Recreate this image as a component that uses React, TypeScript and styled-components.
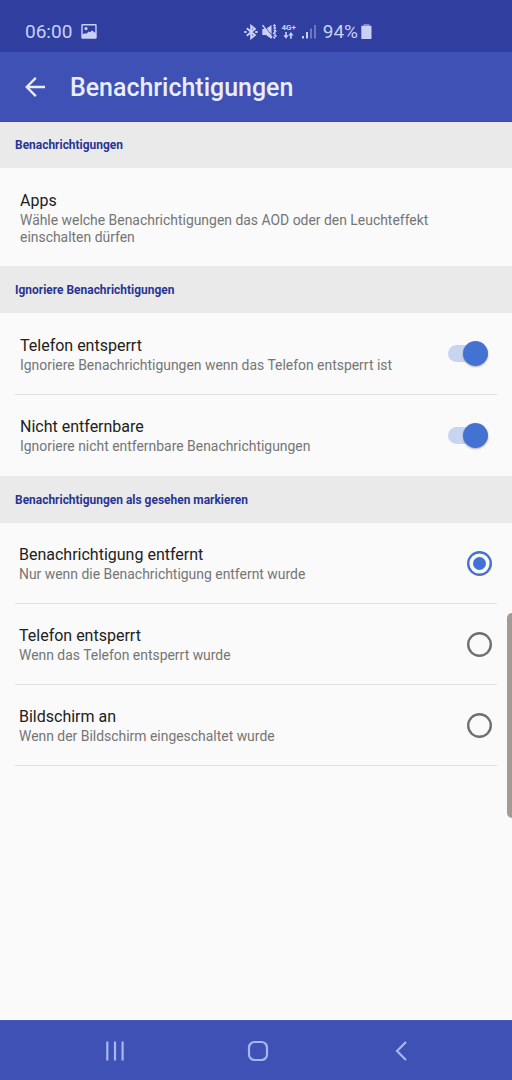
import React from "react";
import styled, { createGlobalStyle } from "styled-components";

const GlobalStyle = createGlobalStyle`
  * { box-sizing: border-box; }
  body { margin: 0; background: #fafafa; font-family: Roboto, "Liberation Sans", sans-serif; }
`;

const Screen = styled.div`
  position: relative;
  display: flex;
  flex-direction: column;
  width: 512px;
  height: 1080px;
  background: #fafafa;
  overflow: hidden;
`;

const StatusBar = styled.div`
  display: flex;
  align-items: center;
  height: 52px;
  padding: 11px 140px 0 25px;
  background: #303f9f;
  color: #c9d0f8;
  flex: none;
`;

const StatusText = styled.span`
  font-size: 19px;
  line-height: 22px;
  white-space: nowrap;
`;

const StatusLeft = styled.div`
  display: flex;
  align-items: center;
  gap: 9px;
  flex: 1;
`;

const StatusRight = styled.div`
  display: flex;
  align-items: center;
`;

const StatusIcon = styled.svg<{ $gap?: number }>`
  display: block;
  flex: none;
  margin-right: ${(p) => p.$gap ?? 0}px;
`;

const BatteryIcon = styled(StatusIcon)`
  margin-left: 3px;
`;

const NetworkType = styled.div`
  display: flex;
  flex-direction: column;
  align-items: center;
  width: 16px;
  margin-right: 5px;
  font-size: 8px;
  line-height: 8px;
  font-weight: 700;
`;

const AppBar = styled.header`
  display: flex;
  align-items: center;
  height: 70px;
  padding: 0 25px;
  gap: 25px;
  background: #3f51b5;
  border-bottom: 1px solid #4349a8;
  color: #e9edff;
  flex: none;
`;

const Title = styled.h1`
  margin: 3px 0 0;
  font-size: 24.950px;
  line-height: 30px;
  font-weight: 500;
`;

const Content = styled.main`
  flex: 1;
`;

const SectionHeader = styled.h2<{ $height: number }>`
  display: flex;
  align-items: center;
  height: ${(p) => p.$height}px;
  margin: 0;
  padding: 0 15px;
  background: #eaeaea;
  color: #283593;
  font-size: 11.960px;
  line-height: 14px;
  font-weight: 700;
`;

const Row = styled.div<{ $height: number; $indent: number; $divider?: boolean }>`
  display: flex;
  align-items: center;
  justify-content: space-between;
  height: ${(p) => p.$height}px;
  margin: 0 15px;
  padding: 0 ${(p) => p.$indent}px;
  border-bottom: 1px solid ${(p) => (p.$divider ? "#e0e0e0" : "transparent")};
`;

const RowText = styled.div<{ $top?: number }>`
  padding-top: ${(p) => p.$top ?? 3}px;
`;

const Label = styled.div`
  font-size: 16px;
  line-height: 20px;
  color: #212121;
`;

const Description = styled.div`
  max-width: 420px;
  font-size: 13.930px;
  line-height: 16.500px;
  margin-top: 1px;
  color: #757575;
`;

const SwitchTrack = styled.div`
  display: flex;
  align-items: center;
  justify-content: flex-end;
  width: 40px;
  height: 17px;
  margin-right: 4px;
  border-radius: 9px;
  background: #c8d5f1;
`;

const SwitchThumb = styled.div`
  width: 25px;
  height: 25px;
  border-radius: 50%;
  background: #4472d3;
  box-shadow: 0 1px 2px rgba(0, 0, 0, 0.3);
  flex: none;
`;

const RadioRing = styled.div<{ $checked: boolean }>`
  display: flex;
  align-items: center;
  justify-content: center;
  width: 25px;
  height: 25px;
  margin-right: 1px;
  border-radius: 50%;
  box-shadow: inset 0 0 0 2.400px ${(p) => (p.$checked ? "#4472d3" : "#707070")};
`;

const RadioDot = styled.div`
  width: 13px;
  height: 13px;
  border-radius: 50%;
  background: #4472d3;
`;

const EdgeHandle = styled.div`
  position: absolute;
  right: -6px;
  top: 613px;
  width: 11px;
  height: 205px;
  border-radius: 5px;
  background: #a39a95;
`;

const NavBar = styled.nav`
  display: flex;
  align-items: center;
  justify-content: space-between;
  height: 60px;
  padding: 1px 100px 0 104px;
  background: #3f51b5;
  border-top: 1px solid #4a5bbb;
  flex: none;
`;

const switches = [
  { label: "Telefon entsperrt", text: "Ignoriere Benachrichtigungen wenn das Telefon entsperrt ist" },
  { label: "Nicht entfernbare", text: "Ignoriere nicht entfernbare Benachrichtigungen" },
];

const radios = [
  { label: "Benachrichtigung entfernt", text: "Nur wenn die Benachrichtigung entfernt wurde", checked: true },
  { label: "Telefon entsperrt", text: "Wenn das Telefon entsperrt wurde", checked: false },
  { label: "Bildschirm an", text: "Wenn der Bildschirm eingeschaltet wurde", checked: false },
];

export default function App() {
  return (
    <>
      <GlobalStyle />
      <Screen>
        <StatusBar>
          <StatusLeft>
            <StatusText>06:00</StatusText>
            <StatusIcon width="16" height="15" viewBox="0 0 16 15">
              <path
                fill="currentColor"
                fillRule="evenodd"
                d="M1.5 0h13A1.2 1.2 0 0 1 15.700 1.200v12.300A1.200 1.200 0 0 1 14.500 14.700h-13A1.200 1.200 0 0 1 .3 13.500V1.200A1.200 1.200 0 0 1 1.500 0zM1.700 1.500v8.700l2.300-1 1.500.5 2-2.300 1.500.8 2-1.800 3.300 2.400V1.500z"
              />
              <circle cx="5" cy="4.600" r="1.600" fill="currentColor" />
            </StatusIcon>
          </StatusLeft>
          <StatusRight>
            <StatusIcon $gap={4} width="14" height="16" viewBox="0 0 14 16" fill="none" stroke="currentColor" strokeWidth="2">
              <path d="M2.800 4.300l8 6.800L7.200 14V2l3.600 2.900-8 6.800" />
              <path d="M.2 8h2.300M11.200 8h2.400" strokeWidth="2.200" />
            </StatusIcon>
            <StatusIcon $gap={4} width="15" height="16" viewBox="0 0 15 16" fill="none" stroke="currentColor">
              <path d="M.3 5h3.600L9.500 1v14L4 11H.3z" fill="currentColor" stroke="none" />
              <path d="M1.600 1l9 11.500" stroke="#303f9f" strokeWidth="1" />
              <path d="M.5 1.200l9.500 12.300" strokeWidth="1.600" />
              <path d="M11.700.8l1.800 2.100-1.500 2.200 1.500 2.300-1.500 2.300 1.500 2.300-1.800 2.300" strokeWidth="2.200" strokeDasharray="2.300 .7" />
            </StatusIcon>
            <NetworkType>
              4G+
              <StatusIcon width="11" height="7" viewBox="0 0 11 7" fill="currentColor">
                <path d="M2.200 0h1.600v3.300h1.800L3 6.700.4 3.300h1.800zM7.100 6.700h1.600V3.400h1.800L7.900.1 5.300 3.400h1.800z" />
              </StatusIcon>
            </NetworkType>
            <StatusIcon $gap={7} width="14" height="15" viewBox="0 0 14 15" fill="currentColor">
              <rect x="0" y="12" width="2" height="2.500" />
              <rect x="4" y="8" width="2" height="6.500" />
              <rect x="8" y="4.500" width="2" height="10" opacity=".4" />
              <rect x="12" y="1" width="2" height="13.500" opacity=".4" />
            </StatusIcon>
            <StatusText>94%</StatusText>
            <BatteryIcon width="11" height="16" viewBox="0 0 11 16" fill="currentColor">
              <rect x="2.500" y="0" width="6" height="2" opacity=".5" />
              <rect x=".3" y="1.700" width="10.200" height="13.300" rx=".8" />
            </BatteryIcon>
          </StatusRight>
        </StatusBar>
        <AppBar>
          <svg width="20" height="20" viewBox="0 0 20 20" fill="none" stroke="currentColor" strokeWidth="2.300">
            <path d="M20 10H2M10.800.9L1.700 10l9.100 9.100" />
          </svg>
          <Title>Benachrichtigungen</Title>
        </AppBar>
        <Content>
          <SectionHeader $height={46}>Benachrichtigungen</SectionHeader>
          <Row $height={98} $indent={5}>
            <RowText>
              <Label>Apps</Label>
              <Description>Wähle welche Benachrichtigungen das AOD oder den Leuchteffekt einschalten dürfen</Description>
            </RowText>
          </Row>
          <SectionHeader $height={47}>Ignoriere Benachrichtigungen</SectionHeader>
          {switches.map((item, i) => (
            <Row key={item.label} $height={i === 0 ? 82 : 81} $indent={5} $divider={i === 0}>
              <RowText $top={i === 0 ? 3 : 2}>
                <Label>{item.label}</Label>
                <Description>{item.text}</Description>
              </RowText>
              <SwitchTrack>
                <SwitchThumb />
              </SwitchTrack>
            </Row>
          ))}
          <SectionHeader $height={47}>Benachrichtigungen als gesehen markieren</SectionHeader>
          {radios.map((item) => (
            <Row key={item.label} $height={81} $indent={4} $divider>
              <RowText $top={2}>
                <Label>{item.label}</Label>
                <Description>{item.text}</Description>
              </RowText>
              <RadioRing $checked={item.checked}>{item.checked && <RadioDot />}</RadioRing>
            </Row>
          ))}
        </Content>
        <EdgeHandle />
        <NavBar>
          <svg width="22" height="20" viewBox="0 0 22 20" stroke="#a9b5f0" strokeWidth="2.200">
            <path d="M3.300 .5v19M11 .5v19M18.600 .5v19" />
          </svg>
          <svg width="22" height="22" viewBox="0 0 22 22" fill="none" stroke="#a9b5f0" strokeWidth="2.200">
            <rect x="2" y="2" width="18" height="18" rx="5.500" />
          </svg>
          <svg width="22" height="20" viewBox="-4 0 22 20" fill="none" stroke="#a9b5f0" strokeWidth="2.200">
            <path d="M12 1L3 10l9 9" />
          </svg>
        </NavBar>
      </Screen>
    </>
  );
}
